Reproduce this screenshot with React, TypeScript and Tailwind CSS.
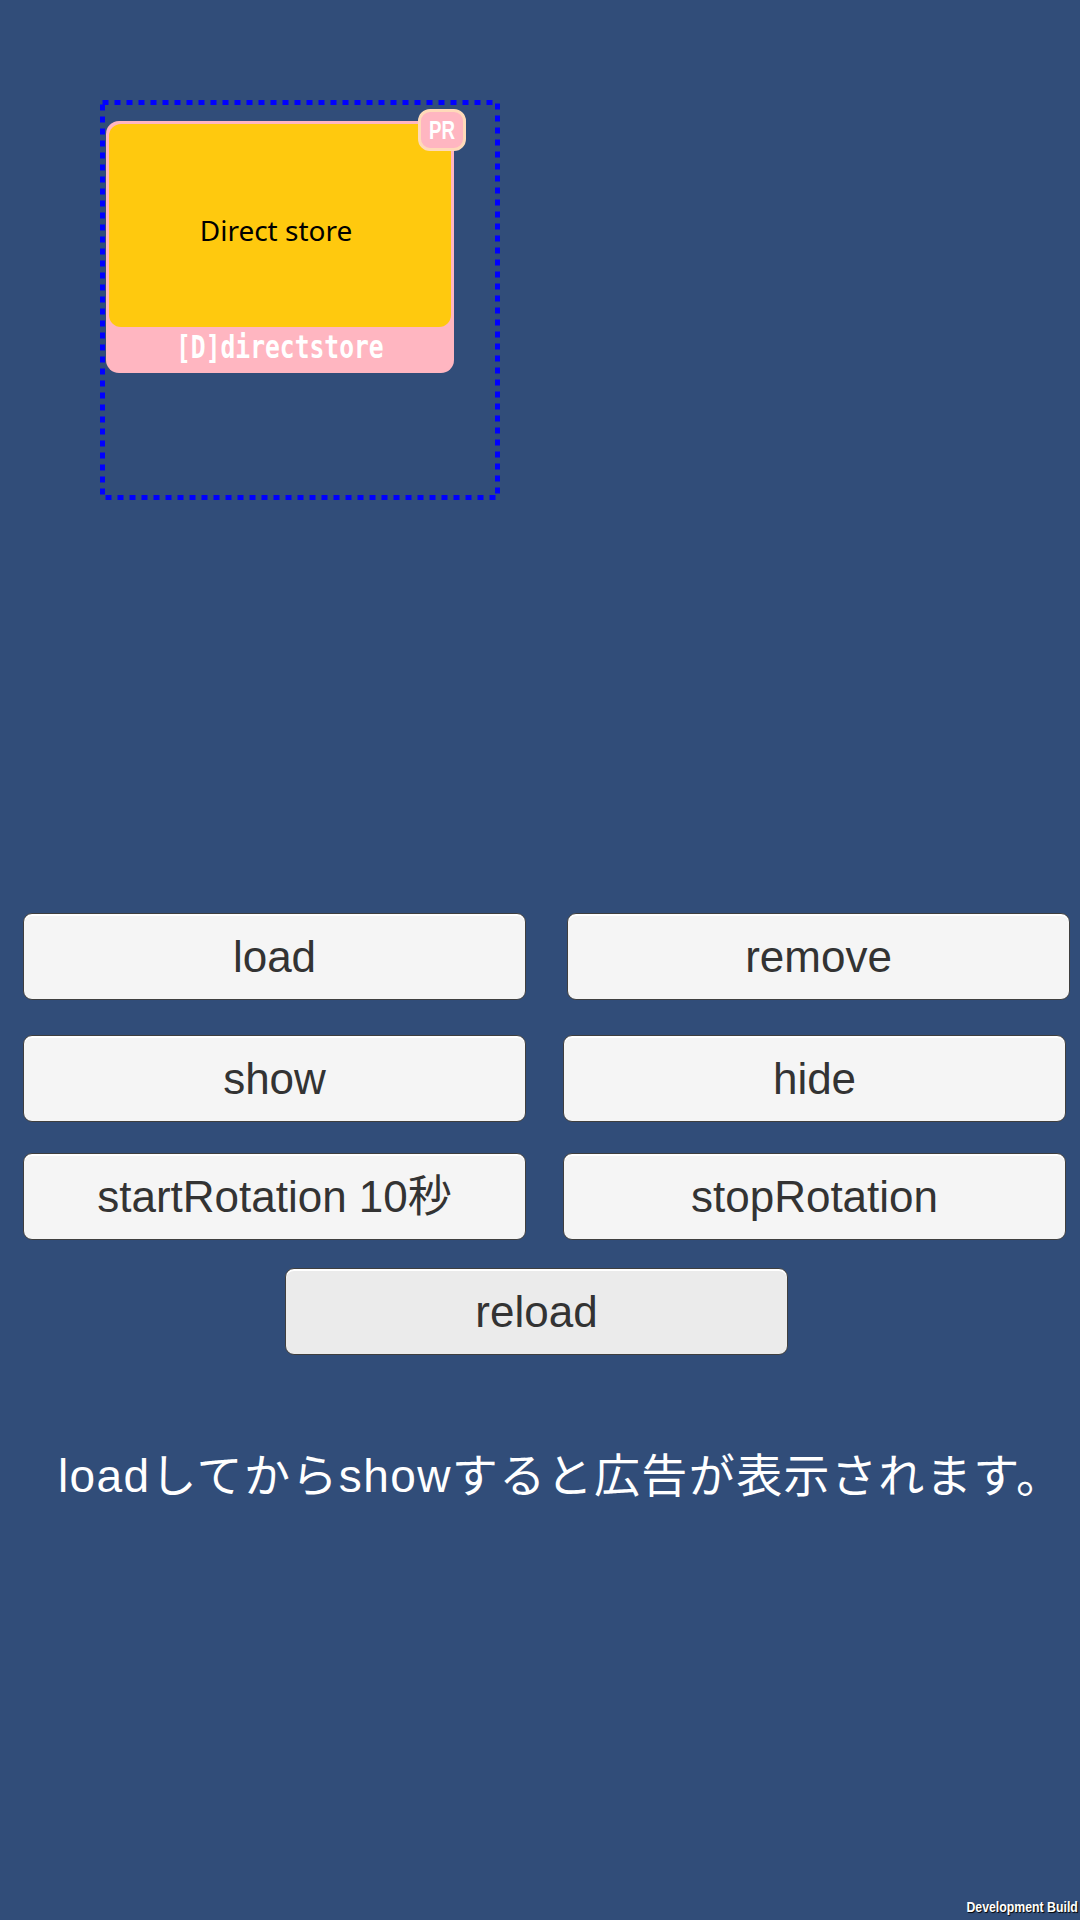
import React from 'react'

const sans = "font-['Liberation_Sans','Noto_Sans_CJK_JP',sans-serif]"

const Btn = ({ label, dim }: { label: string; dim?: boolean }) => (
  <button
    className={`flex h-[87px] w-[503px] items-center justify-center rounded-[9px] border border-[#3f3f3f] text-[44px] leading-none text-[#333333] shadow-[inset_0_2px_0_#ffffff] ${sans} ${
      dim ? 'bg-[#ebebeb]' : 'bg-[#f5f5f5]'
    }`}
  >
    {label}
  </button>
)

const AdFrame = () => (
  <div className="relative ml-[100px] h-[400px] w-[400px] pl-[6px] pt-[21px]">
    {/* dotted banner frame */}
    <svg className="pointer-events-none absolute inset-0" width="400" height="400">
      <rect
        x="2.5"
        y="2.5"
        width="395"
        height="395"
        fill="none"
        stroke="#0000ff"
        strokeWidth="5"
        strokeDasharray="6 6"
      />
    </svg>
    <div className="relative flex h-[252px] w-[348px] flex-col rounded-[13px] bg-[#ffb6c1] p-[3px]">
      <div className="flex h-[203px] items-center justify-center rounded-[12px] bg-[#ffc90e] pr-[8px] pt-[8px]">
        <span className="font-['Noto_Sans',sans-serif] text-[28px] text-black">Direct store</span>
      </div>
      <div className="flex flex-1 items-center justify-center pb-[4px]">
        <span className="inline-block scale-x-[0.77] font-['DejaVu_Sans_Mono',monospace] text-[32px] font-bold leading-none text-white">
          [D]directstore
        </span>
      </div>
      <div className="absolute right-[-12px] top-[-12px] flex h-[42px] w-[48px] items-center justify-center rounded-[12px] border-[3px] border-[#ffdab9] bg-[#ffb6c1]">
        <span className="inline-block scale-x-[0.72] font-['Liberation_Sans',sans-serif] text-[26px] font-bold leading-none text-white">
          PR
        </span>
      </div>
    </div>
  </div>
)

export default function App() {
  return (
    <div className="relative h-[1920px] w-[1080px] overflow-hidden bg-[#314d79] pt-[100px]">
      <AdFrame />

      <div className="mt-[413px] flex flex-col">
        <div className="flex gap-[41px] pl-[23px]">
          <Btn label="load" />
          <Btn label="remove" />
        </div>
        <div className="mt-[35px] flex gap-[37px] pl-[23px]">
          <Btn label="show" />
          <Btn label="hide" />
        </div>
        <div className="mt-[31px] flex gap-[37px] pl-[23px]">
          <Btn label="startRotation 10秒" />
          <Btn label="stopRotation" />
        </div>
        <div className="mt-[28px] flex pl-[285px]">
          <Btn label="reload" dim />
        </div>
      </div>

      <p className={`mt-[93px] pl-[58px] text-[46px] leading-[56px] tracking-[1.4px] text-white ${sans}`}>
        loadしてからshowすると広告が表示されます。
      </p>

      <div className="absolute bottom-[6px] right-[2px] origin-right scale-x-[0.82] font-['Liberation_Sans',sans-serif] text-[15px] font-bold leading-none text-white [text-shadow:1px_1px_1px_#000]">
        Development Build
      </div>
    </div>
  )
}
